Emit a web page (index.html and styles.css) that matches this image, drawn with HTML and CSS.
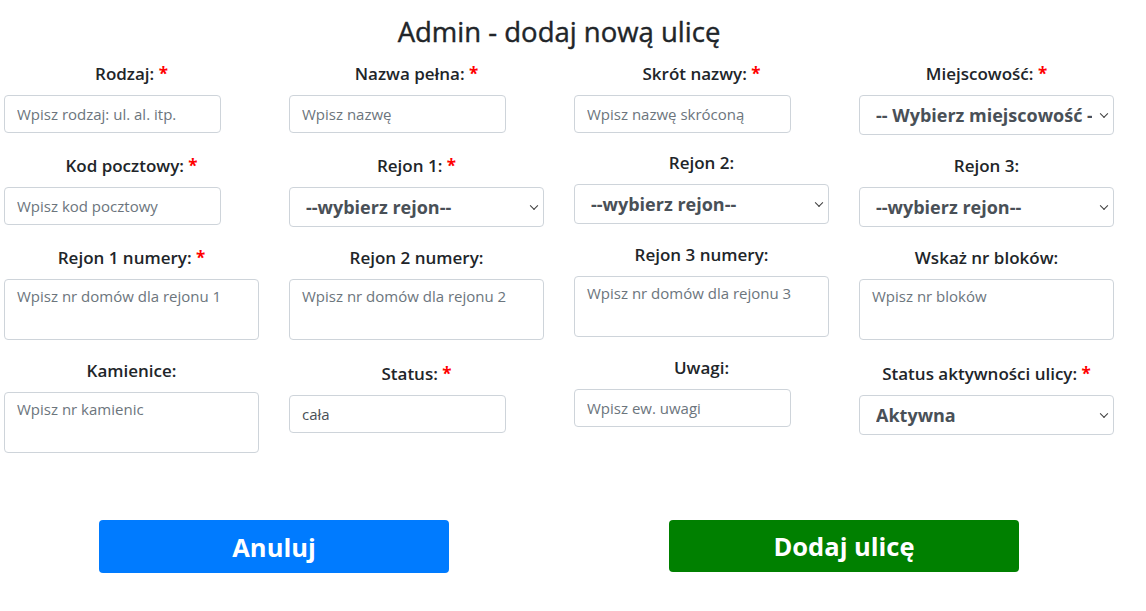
FILE: index.html
```html
<!DOCTYPE html>
<html lang="pl">
<head>
<meta charset="utf-8">
<title>Admin - dodaj nową ulicę</title>
<link rel="stylesheet" href="styles.css">
</head>
<body>
<div class="page">
  <h1 class="title">Admin - dodaj nową ulicę</h1>
  <form class="form-grid">
    <div class="cell">
      <label>Rodzaj: <span class="req">*</span></label>
      <input class="field short" type="text" placeholder="Wpisz rodzaj: ul. al. itp.">
    </div>
    <div class="cell">
      <label>Nazwa pełna: <span class="req">*</span></label>
      <input class="field short" type="text" placeholder="Wpisz nazwę">
    </div>
    <div class="cell">
      <label>Skrót nazwy: <span class="req">*</span></label>
      <input class="field short" type="text" placeholder="Wpisz nazwę skróconą">
    </div>
    <div class="cell">
      <label>Miejscowość: <span class="req">*</span></label>
      <div class="select-wrap"><select class="select"><option>-- Wybierz miejscowość --</option></select></div>
    </div>

    <div class="cell">
      <label>Kod pocztowy: <span class="req">*</span></label>
      <input class="field short" type="text" placeholder="Wpisz kod pocztowy">
    </div>
    <div class="cell">
      <label>Rejon 1: <span class="req">*</span></label>
      <div class="select-wrap"><select class="select"><option>--wybierz rejon--</option></select></div>
    </div>
    <div class="cell up">
      <label>Rejon 2:</label>
      <div class="select-wrap"><select class="select"><option>--wybierz rejon--</option></select></div>
    </div>
    <div class="cell">
      <label>Rejon 3:</label>
      <div class="select-wrap"><select class="select"><option>--wybierz rejon--</option></select></div>
    </div>

    <div class="cell">
      <label>Rejon 1 numery: <span class="req">*</span></label>
      <textarea class="area" placeholder="Wpisz nr domów dla rejonu 1"></textarea>
    </div>
    <div class="cell">
      <label>Rejon 2 numery:</label>
      <textarea class="area" placeholder="Wpisz nr domów dla rejonu 2"></textarea>
    </div>
    <div class="cell up">
      <label>Rejon 3 numery:</label>
      <textarea class="area" placeholder="Wpisz nr domów dla rejonu 3"></textarea>
    </div>
    <div class="cell">
      <label>Wskaż nr bloków:</label>
      <textarea class="area" placeholder="Wpisz nr bloków"></textarea>
    </div>

    <div class="cell">
      <label>Kamienice:</label>
      <textarea class="area" placeholder="Wpisz nr kamienic"></textarea>
    </div>
    <div class="cell down">
      <label>Status: <span class="req">*</span></label>
      <input class="field short" type="text" value="cała">
    </div>
    <div class="cell up">
      <label>Uwagi:</label>
      <input class="field short" type="text" placeholder="Wpisz ew. uwagi">
    </div>
    <div class="cell down">
      <label>Status aktywności ulicy: <span class="req">*</span></label>
      <div class="select-wrap"><select class="select"><option>Aktywna</option></select></div>
    </div>
  </form>
  <div class="actions">
    <button class="btn btn-blue" type="button">Anuluj</button>
    <button class="btn btn-green" type="button">Dodaj ulicę</button>
  </div>
</div>
</body>
</html>
```
FILE: styles.css
```css
html, body {
  margin: 0;
  padding: 0;
  background: #fff;
}

body {
  font-family: "Open Sans", "Liberation Sans", sans-serif;
  color: #212529;
}

.page {
  width: 1110px;
  margin-left: 4px;
  padding-top: 15px;
}

.title {
  margin: 0 0 12.5px;
  font-size: 27.5px;
  font-weight: 500;
  line-height: 33px;
  text-align: center;
  color: #212529;
  -webkit-text-stroke: 0.4px #212529;
}

.form-grid {
  display: grid;
  grid-template-columns: repeat(4, 255px);
  column-gap: 30px;
  row-gap: 18px;
  align-items: start;
}

.cell {
  display: flex;
  flex-direction: column;
  align-items: flex-start;
}

.cell.up {
  margin-top: -3px;
}

.cell.down {
  margin-top: 3px;
}

.cell label {
  align-self: stretch;
  text-align: center;
  font-size: 17px;
  font-weight: 600;
  line-height: 26px;
  margin-bottom: 8px;
  white-space: nowrap;
}

.req {
  color: #ff0000;
  font-weight: 700;
}

.field,
.area,
.select {
  box-sizing: border-box;
  border: 1px solid #ced4da;
  border-radius: 4px;
  background: #fff;
  font-family: "Open Sans", "Liberation Sans", sans-serif;
  color: #495057;
  outline: none;
  margin: 0;
}

.field {
  height: 38px;
  padding: 0 12px;
  font-size: 15px;
}

.field.short {
  width: 217px;
}

.area {
  width: 255px;
  height: 61px;
  padding: 4.5px 12px;
  font-size: 15px;
  line-height: 24px;
  resize: none;
  display: block;
}

.field::placeholder,
.area::placeholder {
  color: #6c757d;
  opacity: 1;
}

.select-wrap {
  position: relative;
  width: 255px;
  height: 40px;
}

.select {
  -webkit-appearance: none;
  appearance: none;
  width: 255px;
  height: 40px;
  padding: 0 21px 0 16px;
  font-size: 18px;
  font-weight: 700;
  color: #495057;
  display: block;
}

.select-wrap::after {
  content: "";
  position: absolute;
  right: 7px;
  top: 50%;
  width: 5px;
  height: 5px;
  border-right: 1.6px solid #3c3c3c;
  border-bottom: 1.6px solid #3c3c3c;
  transform: translateY(-70%) rotate(45deg);
  pointer-events: none;
}

.actions {
  display: flex;
  justify-content: center;
  align-items: flex-start;
  gap: 220px;
  margin-top: 67.5px;
}

.btn {
  width: 350px;
  border: none;
  border-radius: 4px;
  color: #fff;
  font-family: "Open Sans", "Liberation Sans", sans-serif;
  font-size: 25.5px;
  font-weight: 700;
  padding: 0;
  cursor: pointer;
}

.btn-blue {
  height: 53px;
  background: #007bff;
}

.btn-green {
  height: 52px;
  background: #008000;
}
```
